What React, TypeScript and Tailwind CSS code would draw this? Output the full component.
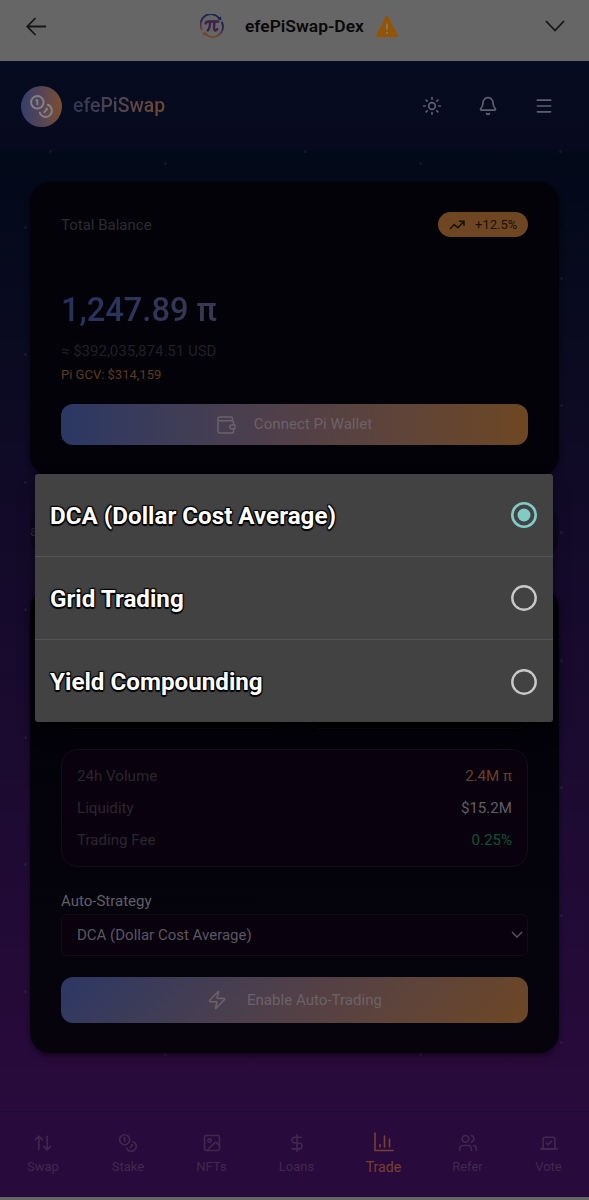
import React from "react";
import {
  ArrowUpDown,
  Bell,
  Coins,
  DollarSign,
  Image as ImageIcon,
  Menu,
  Sun,
  Users,
  Vote,
  Zap,
} from "lucide-react";

const stats = [
  { label: "24h Volume", value: "2.4M π", color: "text-[#6b4028]" },
  { label: "Liquidity", value: "$15.2M", color: "text-[#635d66]" },
  { label: "Trading Fee", value: "0.25%", color: "text-[#0e5434]" },
];

const strategies = [
  { name: "DCA (Dollar Cost Average)", selected: true },
  { name: "Grid Trading", selected: false },
  { name: "Yield Compounding", selected: false },
];

const stars = [
  [50, 151], [305, 151], [560, 151], [165, 163], [420, 163],
  [25, 227], [25, 354], [25, 482], [25, 609], [25, 737], [25, 864], [25, 991],
  [561, 278], [561, 405], [561, 532], [561, 660], [561, 787], [561, 915], [561, 1042],
  [165, 1054], [420, 1054],
];

function ChartIcon() {
  return (
    <svg width="20" height="20" viewBox="0 0 20 20" fill="none" stroke="currentColor" strokeWidth="1.6" strokeLinecap="round">
      <path d="M1 1v17.5h18" />
      <path d="M6 12.5V15M10.5 4v11M15.5 7v8" />
    </svg>
  );
}

const tabs = [
  { label: "Swap", icon: <ArrowUpDown size={20} strokeWidth={1.9} />, width: "w-[86px]" },
  { label: "Stake", icon: <Coins size={20} strokeWidth={1.9} />, width: "w-[84px]" },
  { label: "NFTs", icon: <ImageIcon size={20} strokeWidth={1.9} />, width: "w-[83px]" },
  { label: "Loans", icon: <DollarSign size={20} strokeWidth={1.9} />, width: "w-[87px]" },
  { label: "Trade", icon: <ChartIcon />, width: "w-[87px]", active: true },
  { label: "Refer", icon: <Users size={20} strokeWidth={1.9} />, width: "w-[81px]" },
  { label: "Vote", icon: <Vote size={20} strokeWidth={1.9} />, width: "w-[81px]" },
];

function PiLogo() {
  return (
    <svg width="24" height="24" viewBox="0 0 24 24" fill="none">
      <defs>
        <linearGradient id="ring" x1="0" y1="0" x2="0" y2="1">
          <stop offset="0.3" stopColor="#1b2450" />
          <stop offset="0.65" stopColor="#4b2b50" />
          <stop offset="1" stopColor="#7b4a20" />
        </linearGradient>
      </defs>
      <g stroke="url(#ring)" strokeWidth="1.8">
        <path d="M2.3 16.5A10.3 10.3 0 0 1 19.5 4.7" />
        <path d="M21.7 7.8A10.3 10.3 0 0 1 4.7 19.3" />
      </g>
      <path d="M17.5 5.6 21.4 6.2 21 2.2Z" fill="#1b2450" />
      <path d="M6.5 18.5 2.4 18 3.3 22Z" fill="#7b4a20" />
      <g stroke="#3d2149" strokeLinecap="round">
        <path d="M5.6 9.4c.6-1.8 1.6-2 3-2h9.6" strokeWidth="2.5" />
        <path d="M10 8c0 4-.6 6.8-2.2 8.5" strokeWidth="2.4" />
        <path d="M14.4 8c-.4 4-.8 8.4 1 8.5.9 0 1.5-.5 1.8-1.3" strokeWidth="2.4" />
      </g>
    </svg>
  );
}

function TopBar() {
  return (
    <div className="flex h-[61px] items-center bg-[#666666] pb-[9px] text-[#161616]">
      <svg className="ml-[26px]" width="21" height="19" viewBox="0 0 21 19" fill="none" stroke="currentColor" strokeWidth="1.8">
        <path d="M20 9.5H1.5M9.5 1 1.3 9.5 9.5 18" />
      </svg>
      <div className="ml-[153px]">
        <PiLogo />
      </div>
      <span className="ml-[21px] w-[130px] whitespace-nowrap text-[17.4px] font-semibold text-[#090909]">efePiSwap-Dex</span>
      <svg width="24" height="24" viewBox="0 0 24 24">
        <path d="M12 2.5 22 22H2Z" fill="#945400" stroke="#945400" strokeWidth="1.8" strokeLinejoin="round" />
        <path d="M12 9.8v6" stroke="#777777" strokeWidth="2" />
        <circle cx="12" cy="19" r="1.2" fill="#777777" />
      </svg>
      <svg className="mr-[24px] ml-auto" width="20" height="12" viewBox="0 0 20 12" fill="none" stroke="currentColor" strokeWidth="1.8">
        <path d="m1 1 9 9.5L19 1" />
      </svg>
    </div>
  );
}

function Header() {
  return (
    <header className="flex h-[90px] items-center bg-linear-to-b from-[#050b20] to-[#070a1e] pr-[35px] pl-[21px] text-[#5e606e]">
      <div className="flex size-[41px] items-center justify-center rounded-full bg-linear-to-r from-[#343d6b] via-[#564553] to-[#7c4d2b] text-[#808088]">
        <Coins size={25} strokeWidth={1.9} />
      </div>
      <span className="ml-[11px] bg-linear-to-r from-[#303653] via-[#514650] to-[#70472f] bg-clip-text text-[19.4px] font-medium text-transparent">
        efePiSwap
      </span>
      <div className="ml-auto flex items-center gap-[36px]">
        <Sun size={20} strokeWidth={2} />
        <Bell size={20} strokeWidth={2} />
        <Menu size={20} strokeWidth={2} />
      </div>
    </header>
  );
}

function BalanceCard() {
  return (
    <section className="h-[293px] rounded-[20px] bg-[#020208] px-[31px] pt-[30px] shadow-md shadow-black/40">
      <div className="flex h-[25px] items-center justify-between">
        <span className="pt-px text-[15px] text-[#2c2c32]">Total Balance</span>
        <span className="flex h-[25px] w-[90px] items-center gap-[10px] rounded-full bg-[#6e4722] pl-[11px] text-[13px] text-[#191009]">
          <svg width="16" height="10" viewBox="0 0 16 10" fill="none" stroke="currentColor" strokeWidth="1.5">
            <path d="m1 9 4.2-4.4 3.7 3.2L14.4 2M10 1.3h5V6" />
          </svg>
          +12.5%
        </span>
      </div>
      <div className="mt-[53px] h-10 w-full bg-linear-to-r from-[#253160] via-[#453a4a] to-[#6e4722] bg-clip-text text-[32.6px] leading-10 font-medium text-transparent">
        1,247.89 π
      </div>
      <p className="mt-[9px] h-6 text-[15px] leading-6 text-[#202026]">≈ $392,035,874.51 USD</p>
      <p className="mt-[2px] h-5 text-[13px] leading-5 text-[#5e3b20]">Pi GCV: $314,159</p>
      <button className="mt-[19px] flex h-[41px] w-full items-center justify-center gap-[18px] rounded-xl bg-linear-to-r from-[#2c3764] via-[#524047] to-[#6e4722] text-[15.1px] text-[#6b6267]">
        <svg width="19" height="18" viewBox="0 0 19 18" fill="none" stroke="currentColor" strokeWidth="1.5" strokeLinejoin="round">
          <path d="M15.5 5V2.5A1.5 1.5 0 0 0 14 1H2.5A1.5 1.5 0 0 0 1 2.5v13A1.5 1.5 0 0 0 2.5 17H15a1.5 1.5 0 0 0 1.5-1.5V13M1 4.8h14a1.5 1.5 0 0 1 1.5 1.5V9" />
          <path d="M18 9h-3.2a1.9 1.9 0 0 0 0 3.8H18Z" />
        </svg>
        Connect Pi Wallet
      </button>
    </section>
  );
}

function TradeCard() {
  return (
    <section className="mt-[30px] h-[465px] rounded-[20px] bg-linear-to-b from-[#020208] to-[#06030d] px-[31px] pt-[93px] shadow-md shadow-black/40">
      <div className="flex gap-[23px]">
        <div className="h-12 flex-1 rounded-xl border border-[#0c0c12] bg-[#010104]" />
        <div className="h-12 flex-1 rounded-xl border border-[#0c0c12] bg-[#010104]" />
      </div>
      <div className="mt-5 flex h-[118px] flex-col justify-center rounded-2xl border border-[#130f1a] bg-[#09020e] px-[15px]">
        {stats.map((stat) => (
          <div key={stat.label} className="flex h-8 items-center justify-between text-[15.1px]">
            <span className="text-[#2b252f]">{stat.label}</span>
            <span className={stat.color}>{stat.value}</span>
          </div>
        ))}
      </div>
      <label className="mt-[22px] block h-[25px] text-[15px] leading-6 text-[#606066]">Auto-Strategy</label>
      <div className="flex h-[42px] items-center justify-between rounded-md border border-[#130c18] bg-[#09020e] pr-1 pl-[15px] text-[15px] text-[#5d5761]">
        <span>DCA (Dollar Cost Average)</span>
        <svg width="12" height="8" viewBox="0 0 12 8" fill="none" stroke="currentColor" strokeWidth="1.3">
          <path d="m1 1 5 5 5-5" />
        </svg>
      </div>
      <button className="mt-[21px] flex h-[46px] w-full items-center justify-center gap-5 rounded-xl bg-linear-135 from-[#2c3764] via-[#524047] to-[#6e4722] text-[15.1px] text-[#6b6267]">
        <Zap size={20} strokeWidth={1.9} />
        Enable Auto-Trading
      </button>
    </section>
  );
}

function BottomNav() {
  return (
    <nav className="flex h-[86px] border-t border-[#20082f] bg-[#290a3c]">
      {tabs.map((tab) => (
        <div
          key={tab.label}
          className={`flex flex-col items-center ${tab.width} ${tab.active ? "pt-[20px] text-[14.2px] text-[#78402f]" : "pt-[21px] text-[13px] text-[#41294c]"}`}
        >
          {tab.icon}
          <span className={tab.active ? "mt-[5px] leading-5" : "mt-[4px] leading-5"}>{tab.label}</span>
        </div>
      ))}
    </nav>
  );
}

function StrategyDialog() {
  return (
    <div className="absolute top-[474px] left-[35px] h-[248px] w-[518px] divide-y divide-[#555555] rounded-[3px] bg-[#424242] shadow-lg shadow-black/60">
      {strategies.map((item) => (
        <div key={item.name} className="flex h-[83px] items-center justify-between pr-[16px] pl-[15px]">
          <span className="pt-[2px] text-[24.2px] font-bold text-white [text-shadow:-1px_-1px_1px_#000,1px_-1px_1px_#000,-1px_1px_1px_#000,1px_1px_1px_#000,0_1.5px_1px_#000]">
            {item.name}
          </span>
          {item.selected ? (
            <svg width="26" height="26" viewBox="0 0 26 26" fill="none">
              <circle cx="13" cy="13" r="11.7" stroke="#80cbc4" strokeWidth="2.6" />
              <circle cx="13" cy="13" r="6.5" fill="#80cbc4" />
            </svg>
          ) : (
            <svg width="26" height="26" viewBox="0 0 26 26" fill="none">
              <circle cx="13" cy="13" r="11.7" stroke="#c8c8c8" strokeWidth="2.4" />
            </svg>
          )}
        </div>
      ))}
    </div>
  );
}

export default function App() {
  return (
    <div className="relative flex h-[1200px] w-[589px] flex-col overflow-hidden bg-linear-to-b from-[#020918] from-12% via-[#130a29] via-45% to-[#290a3c] to-92% font-['Roboto',sans-serif]">
      <svg className="pointer-events-none absolute inset-0" width="589" height="1200">
        {stars.map(([x, y]) => (
          <circle key={`${x}-${y}`} cx={x + 0.5} cy={y + 0.5} r="1.5" fill="#777799" fillOpacity="0.14" />
        ))}
      </svg>
      <TopBar />
      <Header />
      <main className="relative h-[960px] px-[30px] pt-[31px]">
        <BalanceCard />
        <div className="mt-[30px] flex h-[53px] items-center rounded-[20px] bg-black/20 text-[15px] text-[#2c2c36]">a</div>
        <TradeCard />
      </main>
      <BottomNav />
      <div className="h-[3px] bg-[#666666]" />
      <StrategyDialog />
    </div>
  );
}
